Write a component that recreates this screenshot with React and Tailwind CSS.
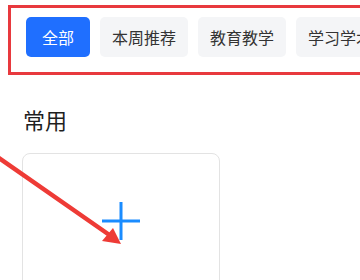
export default function App() {
  const tabs = ['全部', '本周推荐', '教育教学', '学习学术']

  return (
    <div
      className="relative w-[360px] h-[280px] overflow-hidden bg-white"
      style={{ fontFamily: "'Noto Sans CJK SC', 'Noto Sans', sans-serif" }}
    >
      <div className="ml-[8px] mt-[5px] w-[420px] h-[70px] border-[3px] border-[#e8393e] pl-[15px] pt-[9px]">
        <div className="flex gap-[10px]">
          {tabs.map((t, i) => (
            <button
              key={t}
              className={
                i === 0
                  ? 'h-[40px] px-[16px] rounded-[5px] bg-[#1f6fff] text-white text-[16px] leading-none shrink-0'
                  : 'h-[40px] px-[12px] rounded-[5px] bg-[#f4f5f7] text-[#333] text-[16px] leading-none shrink-0'
              }
            >
              {t}
            </button>
          ))}
        </div>
      </div>

      <h2 className="ml-[23px] mt-[29px] text-[22px] leading-[30px] text-[#1f1f1f]">常用</h2>

      <div className="ml-[22px] mt-[19px] w-[198px] h-[140px] rounded-[8px] border border-[#e3e3e3] flex justify-center pt-[47px]">
        <svg width="40" height="40" viewBox="0 0 40 40">
          <path d="M20 1v38M1 20h38" stroke="#1a8cff" strokeWidth="3" fill="none" />
        </svg>
      </div>

      <svg className="absolute left-0 top-0 pointer-events-none" width="360" height="280" viewBox="0 0 360 280">
        <line x1="-4" y1="156" x2="108" y2="234" stroke="#ee3b36" strokeWidth="4.5" strokeLinecap="round" />
        <polygon points="121,244 102,241 113,228" fill="#ee3b36" />
      </svg>
    </div>
  )
}
